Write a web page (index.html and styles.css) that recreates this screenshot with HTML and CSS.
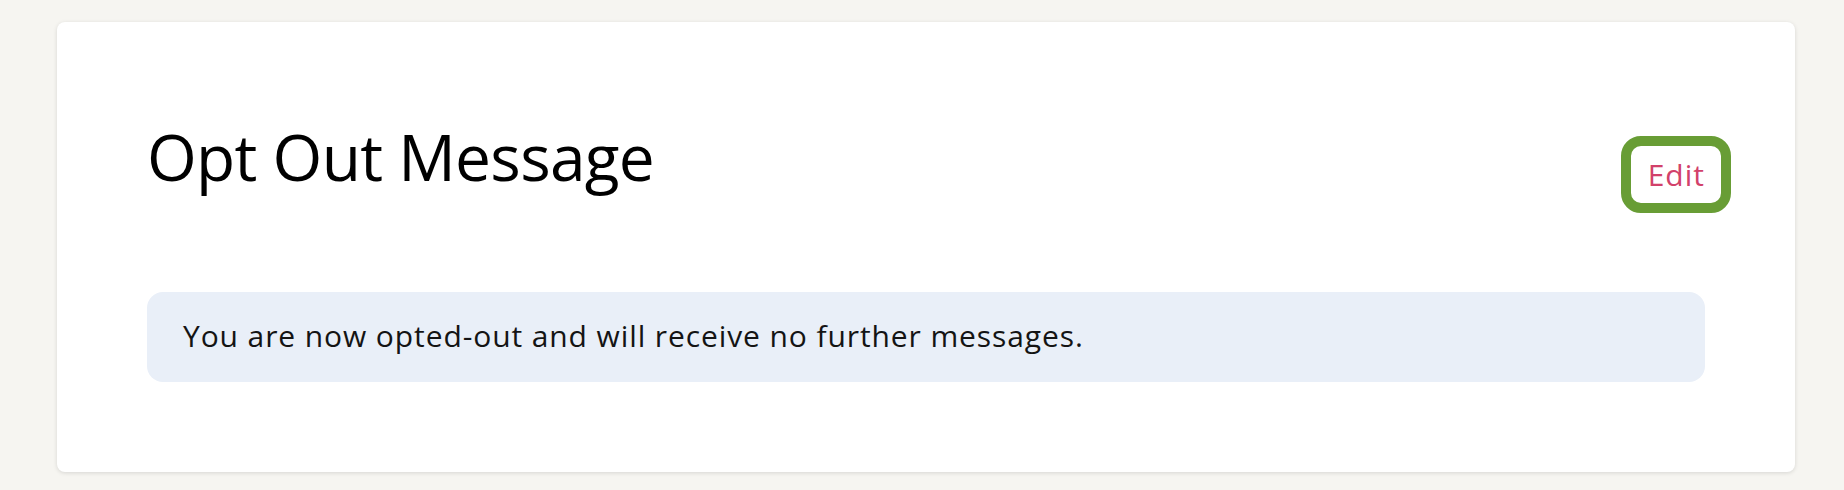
FILE: index.html
```html
<!DOCTYPE html>
<html lang="en">
<head>
<meta charset="utf-8">
<title>Opt Out Message</title>
<link rel="stylesheet" href="styles.css">
</head>
<body>
  <section class="card">
    <div class="card-header">
      <h2 class="card-title">Opt Out Message</h2>
      <button class="edit-btn" type="button">Edit</button>
    </div>
    <div class="message-box">You are now opted-out and will receive no further messages.</div>
  </section>
</body>
</html>
```

FILE: styles.css
```css
html, body {
  margin: 0;
  padding: 0;
}
body {
  background: #f6f5f1;
  padding: 22px 49px 18px 57px;
  font-family: "Open Sans", "Noto Sans", sans-serif;
  color: #111;
}
.card {
  background: #ffffff;
  border-radius: 8px;
  box-shadow: 0 1px 4px rgba(0, 0, 0, 0.13);
  padding: 90px 90px 90px 90px;
}
.card-header {
  display: flex;
  justify-content: space-between;
  align-items: flex-start;
  margin-right: -26px;
  margin-bottom: 79px;
}
.card-title {
  margin: 13px 0 0 0;
  font-size: 64px;
  font-weight: 400;
  letter-spacing: -0.7px;
  line-height: 64px;
  color: #000;
}
.edit-btn {
  margin-top: 24px;
  border: 10px solid #689d35;
  border-radius: 20px;
  background: #fff;
  padding: 0 16px 0 17px;
  font-family: "Open Sans", "Noto Sans", sans-serif;
  font-size: 30px;
  letter-spacing: 1px;
  line-height: 57px;
  color: #d2416a;
  cursor: pointer;
}
.message-box {
  background: #e9eff8;
  border-radius: 16px;
  padding: 2px 34px 4px 36px;
  font-size: 30px;
  letter-spacing: 0.9px;
  line-height: 84px;
  color: #141414;
}
```
